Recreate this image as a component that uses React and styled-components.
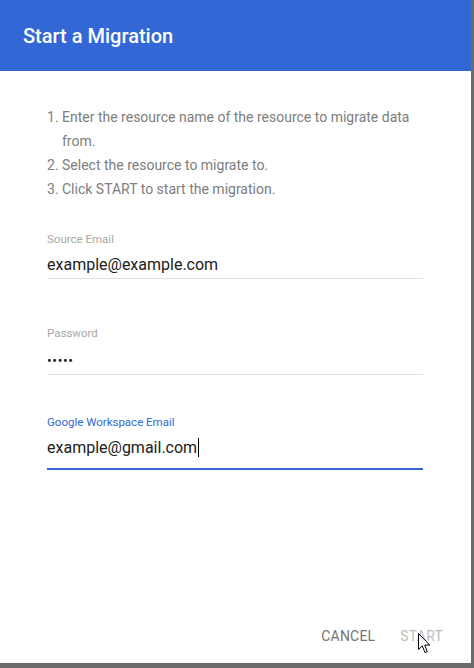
import React from "react"
import styled, { createGlobalStyle } from "styled-components"

const steps = [
  "Enter the resource name of the resource to migrate data from.",
  "Select the resource to migrate to.",
  "Click START to start the migration."
]

function Field({ label, value, focused, gap, caret, secret }) {
  return (
    <FieldBox $gap={gap}>
      <Label $focused={focused}>{label}</Label>
      <Value $focused={focused} $secret={secret}>
        {value}
        {caret && <Caret />}
      </Value>
    </FieldBox>
  )
}

function Cursor() {
  return (
    <CursorWrap>
      <svg width="13" height="21" viewBox="0 0 13 21">
        <path
          d="M0.5 0.5 L0.5 16.5 L4.3 12.9 L7 19.6 L9.3 18.6 L6.7 12.1 L11.8 12.1 Z"
          fill="#fff"
          stroke="#000"
          strokeWidth="1"
          strokeLinejoin="miter"
        />
      </svg>
    </CursorWrap>
  )
}

export default function App() {
  return (
    <>
      <GlobalStyle />
      <Dialog>
        <Header>
          <Title>Start a Migration</Title>
        </Header>
        <Content>
          <Steps>
            {steps.map((step, i) => (
              <Step key={i}>
                <StepNum>{i + 1}.</StepNum>
                <span>{step}</span>
              </Step>
            ))}
          </Steps>
          <Field label="Source Email" value="example@example.com" gap={30} />
          <Field label="Password" value="•••••" gap={46} secret />
          <Field label="Google Workspace Email" value="example@gmail.com" gap={39} focused caret />
        </Content>
        <Footer>
          <Button>Cancel</Button>
          <Button $disabled>Start</Button>
          <Cursor />
        </Footer>
      </Dialog>
    </>
  )
}

const GlobalStyle = createGlobalStyle`
  html, body {
    margin: 0;
    padding: 0;
    background: #6b6b6b;
    font-family: Roboto, "Liberation Sans", sans-serif;
  }
`

const Dialog = styled.div`
  width: 471px;
  height: 663px;
  background: #fff;
  display: flex;
  flex-direction: column;
`

const Header = styled.div`
  height: 71px;
  background: #3367d6;
  display: flex;
  align-items: center;
  padding: 0 23px;
  box-sizing: border-box;
`

const Title = styled.h1`
  margin: 0;
  color: #fff;
  font-size: 20px;
  font-weight: 500;
`

const Content = styled.div`
  padding: 34px 48px 0 47px;
`

const Steps = styled.div`
  color: #7d7d7d;
  font-size: 14px;
  line-height: 24px;
`

const Step = styled.div`
  display: flex;
`

const StepNum = styled.span`
  flex: 0 0 15px;
`

const FieldBox = styled.div`
  margin-top: ${(p) => p.$gap}px;
`

const Label = styled.div`
  font-size: 11.5px;
  line-height: 16px;
  color: ${(p) => (p.$focused ? "#3367d6" : "#a8a8a8")};
`

const Value = styled.div`
  font-size: ${(p) => (p.$secret ? "14px" : "16px")};
  line-height: 24px;
  color: #212121;
  padding: ${(p) => (p.$focused ? "6px 0 8px" : p.$secret ? "8px 0 1px" : "6px 0 1px")};
  border-bottom: ${(p) => (p.$focused ? "2px solid #3367d6" : "1px solid #e0e0e0")};
  letter-spacing: ${(p) => (p.$secret ? "0.6px" : "normal")};
`

const Caret = styled.span`
  display: inline-block;
  width: 1px;
  height: 19px;
  background: #000;
  vertical-align: -4px;
  margin-left: 1px;
`

const Footer = styled.div`
  margin-top: auto;
  position: relative;
  display: flex;
  justify-content: flex-end;
  gap: 9px;
  padding: 0 20px 9px;
`

const Button = styled.button`
  height: 36px;
  padding: 0 8px;
  border: none;
  background: transparent;
  font-family: Roboto, "Liberation Sans", sans-serif;
  font-size: 14px;
  letter-spacing: 0.2px;
  text-transform: uppercase;
  color: ${(p) => (p.$disabled ? "#bdbdbd" : "#757575")};
`

const CursorWrap = styled.div`
  position: absolute;
  left: 418px;
  top: 15px;
  line-height: 0;
`
